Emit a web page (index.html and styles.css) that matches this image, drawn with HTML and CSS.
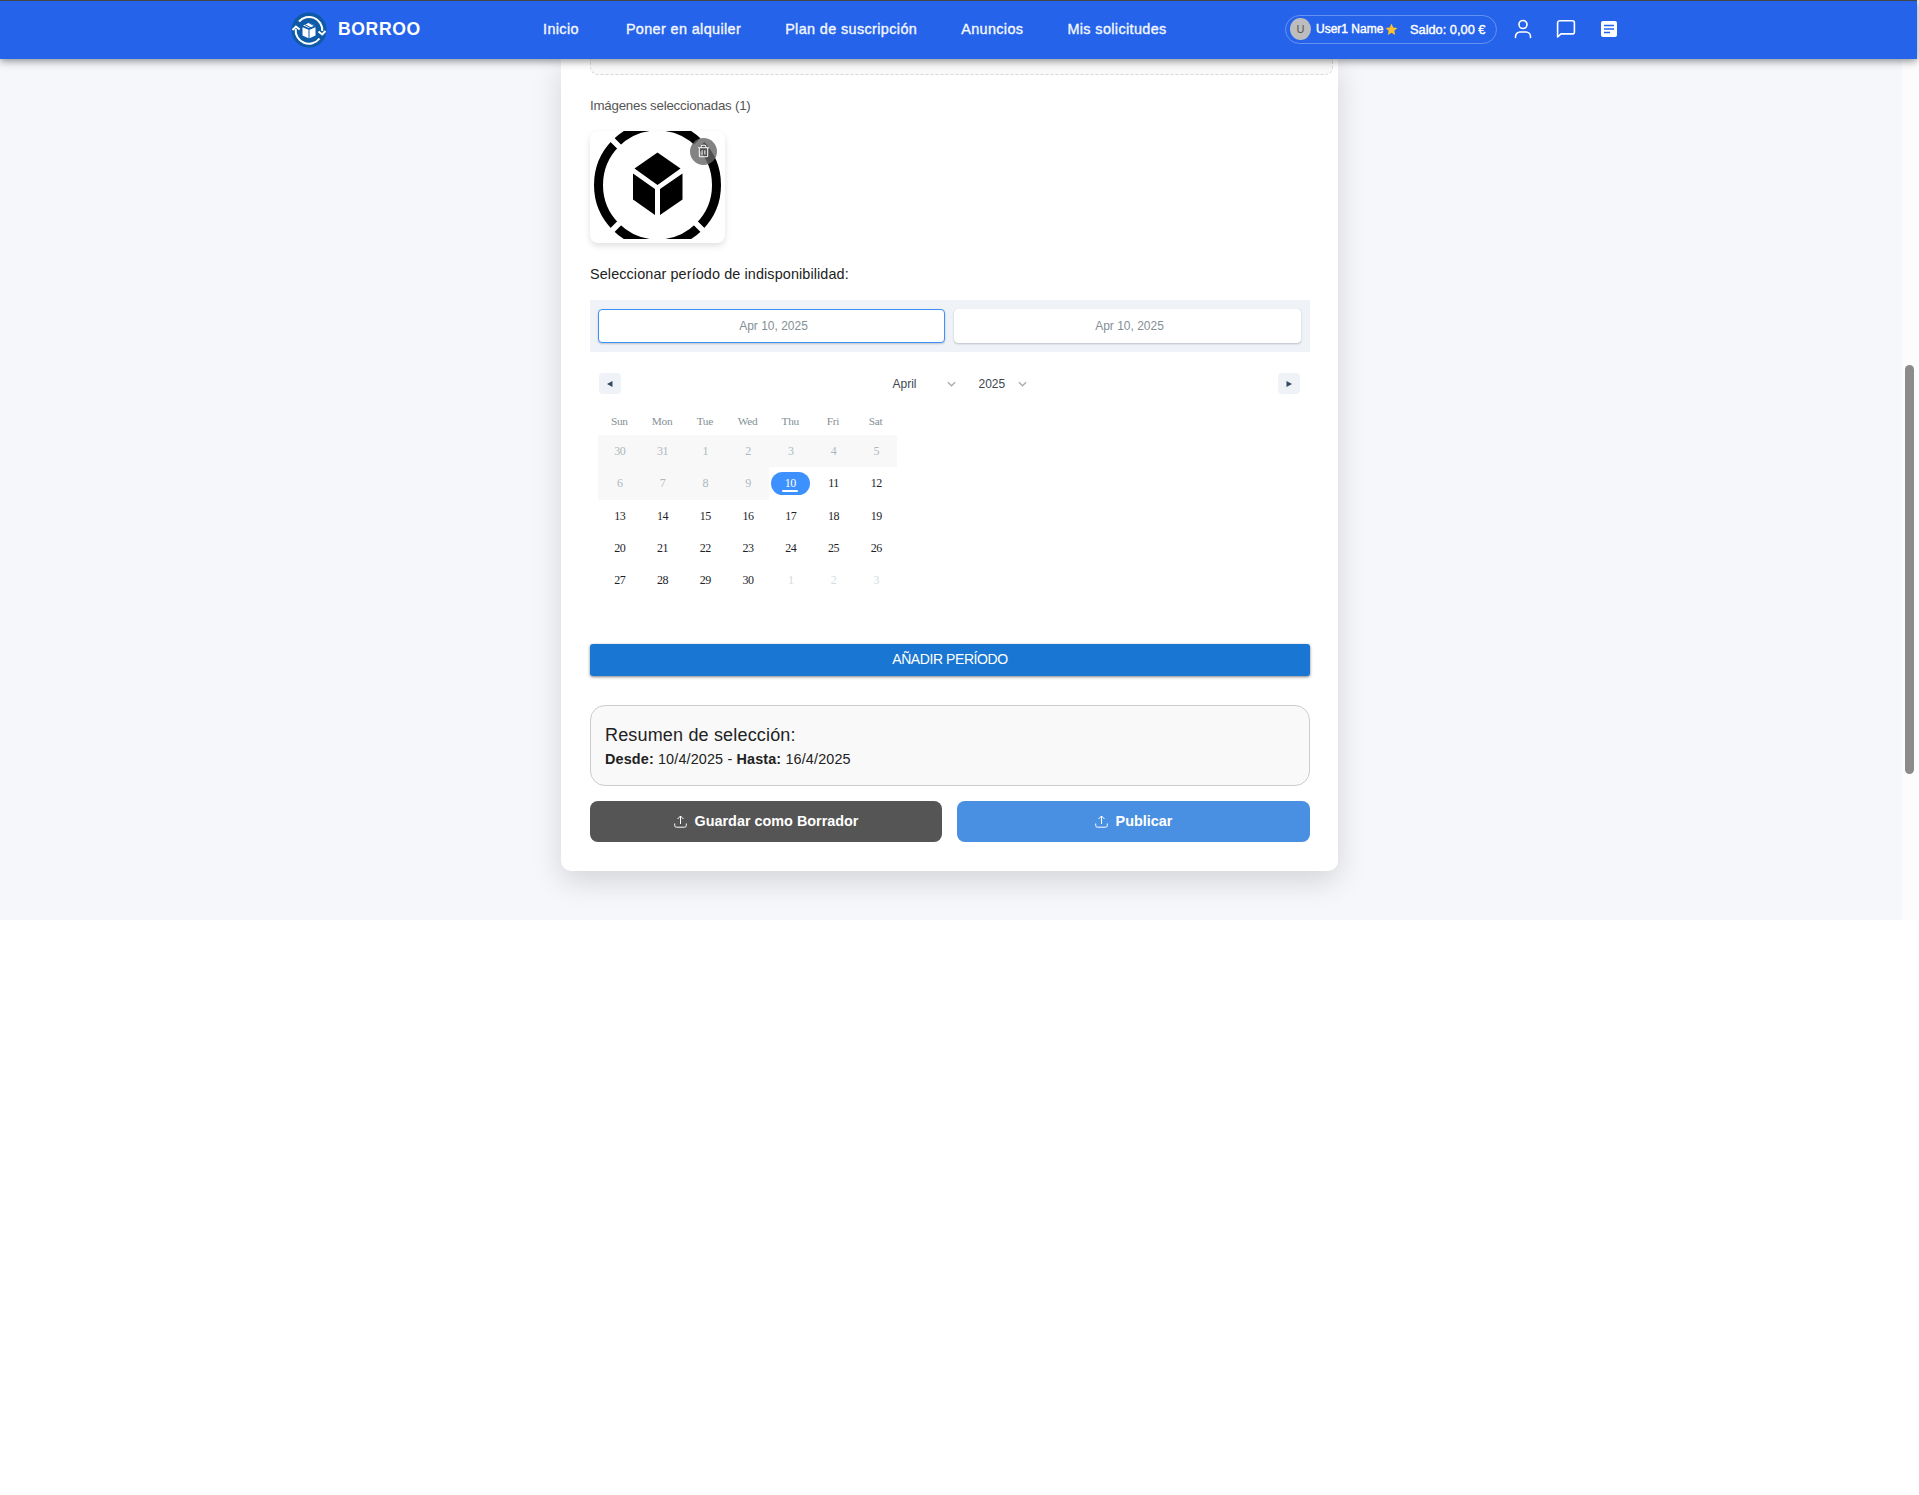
FILE: index.html
```html
<!DOCTYPE html>
<html lang="es">
<head>
<meta charset="utf-8">
<title>Borroo</title>
<link rel="stylesheet" href="styles.css">
</head>
<body>
<header class="topbar">
  <div class="brand">
    <svg class="logo" viewBox="0 0 36 36">
      <circle cx="18" cy="18" r="17.6" fill="#0d5aa7"/>
      <g fill="none" stroke="#fff" stroke-width="2">
        <path d="M8 9.5A13.3 13.3 0 0 1 31.3 19"/><path d="M28.5 26.5A13.3 13.3 0 0 1 4.7 17"/>
        <path d="M1.5 18l3.4-3.5 3.8 3"/><path d="M27.5 19.5l3.7 3 3.3-3.5"/>
      </g>
      <path d="M11.5 15.2l6 2.6v8.4l-6-2.8zM18.5 17.8l6-2.6v8.2l-6 2.8z" fill="#fff"/>
      <path d="M12 13.5l6-2.8 6 2.8-6 2.5z" fill="#fff"/><path d="M13.5 12.5l7 3.5M17.5 10.5l7 4" stroke="#0d5aa7"/>
    </svg>
    <span class="brand-name">BORROO</span>
  </div>
  <nav class="nav">
    <a class="home">Inicio</a><a>Poner en alquiler</a><a>Plan de suscripción</a><a>Anuncios</a><a>Mis solicitudes</a>
  </nav>
  <div class="account">
    <div class="user-pill">
      <span class="avatar">U</span>
      <span class="user-name">User1 Name</span>
      <svg class="star" viewBox="0 0 24 24"><path d="M12 1l3.2 7.2 7.8.8-5.8 5.2 1.7 7.8L12 18l-6.9 4 1.7-7.800L1 9l7.800-.8z" fill="#fbc02d"/></svg>
      <span class="balance">Saldo: 0,00 €</span>
    </div>
    <svg class="tool" viewBox="0 0 20 20"><g fill="none" stroke="#fff" stroke-width="1.6" stroke-linecap="round"><circle cx="10" cy="5.500" r="4"/><path d="M2.500 18.500v-1a4.500 4.500 0 0 1 4.500-4.500h6a4.500 4.500 0 0 1 4.500 4.500v1"/></g></svg>
    <svg class="tool" viewBox="0 0 20 20"><path d="M1.600 18V3.500A2 2 0 0 1 3.600 1.700h12.800a2 2 0 0 1 2 2v9.200a2 2 0 0 1-2 2H5z" fill="none" stroke="#fff" stroke-width="1.600" stroke-linejoin="round"/></svg>
    <svg class="tool" viewBox="0 0 20 20"><rect x="2" y="2" width="16" height="16" rx="2" fill="#fff"/><path d="M5 6.500h10M5 10h10M5 13.500h6" stroke="#2563eb" stroke-width="1.500"/></svg>
  </div>
</header>
<main class="page">
  <section class="card">
    <div class="dropzone"></div>
    <p class="images-title">Imágenes seleccionadas (1)</p>
    <div class="thumb">
      <svg class="thumb-image" viewBox="0 0 127 108">
        <circle cx="63.500" cy="54" r="59" fill="none" stroke="#000" stroke-width="9"/>
        <path d="M18 8.500l9 9M109 8.500l-9 9M18 99.500l9-9M109 99.500l-9-9" stroke="#fff" stroke-width="5.500"/>
        <path d="M63.500 21.500L86.500 37.500 63.500 54 40.500 37.500zM39 42.500L61 58v26L39 68.500zM88.500 42.500L66 58v26l22.500-15.500z"/>
      </svg>
      <button class="thumb-remove">
        <svg viewBox="0 0 14 14"><g fill="none" stroke="#fff" stroke-width="1.100"><path d="M1 3.500h12M4.500 3.500V2a1.300 1.300 0 0 1 1.300-1.300h2.400A1.300 1.300 0 0 1 9.500 2v1.500M2.500 3.500V12a1.300 1.300 0 0 0 1.300 1.300h6.400A1.300 1.300 0 0 0 11.500 12V3.500M5.500 6.200v4.500M8.500 6.200v4.500"/></g></svg>
      </button>
    </div>
    <p class="period-title">Seleccionar período de indisponibilidad:</p>
    <div class="range">
      <div class="range-input active">Apr 10, 2025</div>
      <div class="range-input">Apr 10, 2025</div>
    </div>
    <div class="month-bar">
      <button class="step"><svg viewBox="0 0 6 6"><path d="M5.500 0v6L0 3z"/></svg></button>
      <div class="pickers">
        <span class="month">April</span><svg class="caret" viewBox="0 0 10 6"><path d="M1 1l4 4 4-4"/></svg>
        <span class="year">2025</span><svg class="caret" viewBox="0 0 10 6"><path d="M1 1l4 4 4-4"/></svg>
      </div>
      <button class="step"><svg viewBox="0 0 6 6"><path d="M.5 0v6L6 3z"/></svg></button>
    </div>
    <div class="weekdays"><span>Sun</span><span>Mon</span><span>Tue</span><span>Wed</span><span>Thu</span><span>Fri</span><span>Sat</span></div>
    <div class="days">
      <span class="off">30</span><span class="off">31</span><span class="off">1</span><span class="off">2</span><span class="off">3</span><span class="off">4</span><span class="off">5</span>
      <span class="off">6</span><span class="off">7</span><span class="off">8</span><span class="off">9</span><span class="today"><b>10</b></span><span>11</span><span>12</span>
      <span>13</span><span>14</span><span>15</span><span>16</span><span>17</span><span>18</span><span>19</span>
      <span>20</span><span>21</span><span>22</span><span>23</span><span>24</span><span>25</span><span>26</span>
      <span>27</span><span>28</span><span>29</span><span>30</span><span class="next">1</span><span class="next">2</span><span class="next">3</span>
    </div>
    <button class="add-period">AÑADIR PERÍODO</button>
    <div class="summary">
      <h2>Resumen de selección:</h2>
      <p><strong>Desde:</strong> 10/4/2025 - <strong>Hasta:</strong> 16/4/2025</p>
    </div>
    <div class="actions">
      <button class="draft"><svg viewBox="0 0 13 13"><path d="M6.500 9V1M3.500 4l3-3 3 3M.7 8.500v2a1.700 1.700 0 0 0 1.700 1.700h8.200a1.700 1.700 0 0 0 1.700-1.700v-2"/></svg>Guardar como Borrador</button>
      <button class="publish"><svg viewBox="0 0 13 13"><path d="M6.500 9V1M3.500 4l3-3 3 3M.7 8.500v2a1.700 1.700 0 0 0 1.700 1.700h8.200a1.700 1.700 0 0 0 1.700-1.700v-2"/></svg>Publicar</button>
    </div>
  </section>
  <aside class="scroll-track"><div class="scroll-thumb"></div></aside>
</main>
</body>
</html>
```
FILE: styles.css
```css
* { box-sizing: border-box; }
body { margin: 0; background: #fff; font-family: "Liberation Sans", Arial, sans-serif; color: #222; }
p, h2 { margin: 0; white-space: nowrap; }
button { border: 0; padding: 0; font-family: inherit; display: flex; align-items: center; justify-content: center; }
svg { display: block; flex: none; }

.topbar { position: relative; z-index: 2; width: 1917px; height: 59px; padding-bottom: 2px; border-top: 1px solid #444; background: #2563eb; box-shadow: 0 2px 8px rgba(0,0,0,.45); display: flex; align-items: center; color: #fff; white-space: nowrap; }
.brand { width: 543px; padding-left: 291px; display: flex; align-items: center; }
.logo { width: 36px; height: 36px; margin-top: 1px; }
.brand-name { margin-left: 11px; font-size: 17.6px; font-weight: 700; letter-spacing: .6px; line-height: 20px; margin-top: -1px; }
.nav { display: flex; gap: 44px; width: 742px; font-size: 14.4px; letter-spacing: .38px; color: #f4f7fe; -webkit-text-stroke: .35px #f4f7fe; }
.home { margin-right: 3px; }
.account { display: flex; align-items: center; }
.user-pill { width: 212px; height: 29px; margin-right: 16px; border: 1px solid #6692f1; border-radius: 15px; display: flex; align-items: center; padding-left: 4px; font-size: 12px; -webkit-text-stroke: .4px #fff; }
.avatar { width: 21px; height: 22px; border-radius: 50%; background: #bdbdbd; color: #555; -webkit-text-stroke: 0; font-size: 11px; display: grid; place-items: center; }
.user-name { margin-left: 5px; width: 67px; }
.star { width: 13px; height: 13px; margin-left: 2px; }
.balance { margin-left: 12px; font-size: 12.8px; }
.tool { width: 20px; height: 20px; margin-right: 23px; }

.page { position: relative; width: 1917px; height: 861px; background: #f5f7fb; display: flex; align-items: flex-start; padding-left: 561px; overflow: hidden; }
.card { width: 777px; height: 812px; padding: 0 28px 0 29px; background: #fff; border-radius: 0 0 10px 10px; box-shadow: 0 10px 30px rgba(0,0,0,.14); }
.scroll-track { width: 15px; height: 861px; margin-left: auto; background: #fcfcfc; padding: 306px 3px 0; }
.scroll-thumb { width: 9px; height: 409px; border-radius: 5px; background: #8b8b8b; }

.dropzone { width: 743px; height: 16px; border: 1px dashed #d9d9d9; border-top: 0; border-radius: 0 0 8px 8px; background: #f9f9f9; }
.images-title { margin-top: 21px; height: 20px; line-height: 20px; font-size: 13.3px; letter-spacing: -.22px; color: #555; }
.thumb { position: relative; width: 135px; height: 112px; margin-top: 15px; border-radius: 8px; box-shadow: 0 3px 6px rgba(0,0,0,.12); padding: 0 4px 4px; }
.thumb-image { width: 127px; height: 108px; }
.thumb-remove { position: absolute; right: 8px; top: 7px; width: 27px; height: 27px; border-radius: 50%; background: rgba(100,100,100,.8); }
.thumb-remove svg { width: 13px; height: 14px; margin-top: -2px; }
.period-title { margin-top: 21px; height: 20px; line-height: 20px; font-size: 14.4px; letter-spacing: .11px; }

.range { margin-top: 16px; height: 52px; padding: 9px 9px 9px 8px; background: #eff2f7; display: flex; gap: 9px; }
.range-input { flex: 1; border: 1px solid #fff; border-radius: 4px; background: #fff; box-shadow: 0 1px 2px rgba(35,57,66,.25); color: #849095; font-size: 12px; line-height: 32px; text-align: center; padding-left: 4px; }
.range-input.active { border-color: #3d91ff; }

.month-bar { margin: 21px 10px 0 9px; display: flex; justify-content: space-between; }
.step { width: 22px; height: 21px; border-radius: 4px; background: #eff2f7; }
.step svg { width: 6px; height: 6px; fill: #34495e; margin-top: 1px; }
.pickers { width: 158px; padding-left: 22px; display: flex; align-items: center; font-size: 12px; color: #3e484f; }
.month { width: 54px; }
.year { width: 39px; margin-left: 23px; }
.caret { width: 9px; height: 6px; fill: none; stroke: #a6adb0; stroke-width: 1.5; }

.weekdays, .days { width: 299px; margin-left: 8px; display: grid; grid-template-columns: repeat(7, 1fr); font-family: "Liberation Serif", "Times New Roman", serif; text-align: center; }
.weekdays { margin-top: 17px; height: 24px; font-size: 11.3px; letter-spacing: -.3px; line-height: 20px; color: #849095; }
.days { grid-template-rows: 32px 33px 32px 32px 32px; font-size: 12px; letter-spacing: -.5px; line-height: 33px; color: #1d2429; }
.days span { padding-left: 1px; }
.off { background: #f8f8f8; color: #aeb9bf; }
.next { color: #d5dce0; }
.days .today { padding: 5px 2px 0; }
.today b { display: block; height: 23px; border-radius: 12px; background: #3d91ff; color: #fff; font-weight: 400; line-height: 23px; }
.today b::after { content: ""; display: block; width: 16px; height: 2px; margin: -5px auto 0; border-radius: 1px; background: #fff; }

.add-period { width: 720px; height: 32px; margin-top: 48px; border-radius: 3px; background: #1976d2; color: #fff; font-size: 14px; letter-spacing: -.42px; padding-bottom: 2px; box-shadow: 0 1px 3px rgba(0,0,0,.5); }
.summary { height: 81px; margin-top: 29px; padding: 18px 15px 0 14px; border: 1px solid #ccc; border-radius: 15px; background: #f9f9f9; }
.summary h2 { height: 22px; line-height: 22px; font-size: 18px; letter-spacing: .17px; font-weight: 400; }
.summary p { margin-top: 3px; line-height: 20px; font-size: 14.4px; letter-spacing: .14px; }
.actions { margin-top: 15px; display: flex; gap: 15px; }
.actions button { height: 41px; border-radius: 8px; color: #fff; font-size: 14.4px; font-weight: 700; gap: 8px; padding-bottom: 1px; }
.actions svg { width: 13px; height: 13px; fill: none; stroke: #fff; stroke-width: 1; margin-top: 1px; }
.actions .draft { width: 352px; background: #555; }
.actions .publish { width: 353px; background: #4a90e2; }
```
